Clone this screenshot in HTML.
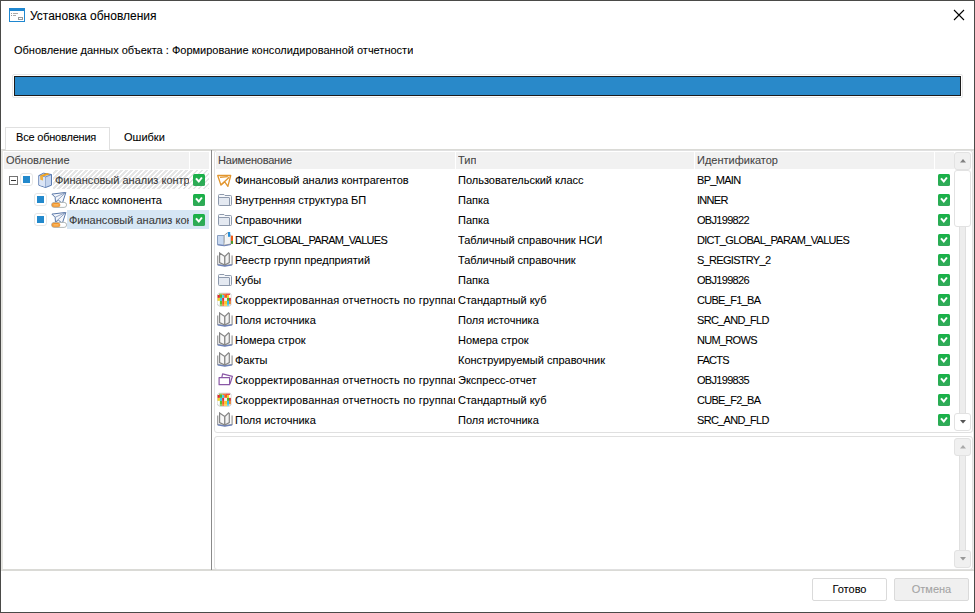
<!DOCTYPE html><html><head><meta charset="utf-8"><title>Установка обновления</title><style>
*{box-sizing:border-box;margin:0;padding:0}
html,body{width:975px;height:613px;overflow:hidden;background:#fff}
#win{position:relative;width:975px;height:613px;background:#fff;font-family:"Liberation Sans",sans-serif;font-size:11px;color:#000}
.abs{position:absolute;display:block}
.t{position:absolute;white-space:nowrap;overflow:hidden;line-height:20px;font-family:"Liberation Sans",sans-serif;font-size:11px;-webkit-text-stroke:0.08px currentColor}
.lat{letter-spacing:-0.7px}
.title{left:30px;top:8px;font-size:12px;line-height:16px;color:#000}
.sub{left:14px;top:40px;color:#000}
#pb-o{position:absolute;left:12px;top:74px;width:951px;height:24px;border:1px solid #e8e8e8;border-radius:2px}
#pb{position:absolute;left:14px;top:76px;width:947px;height:20px;border:1px solid #1d1d1d;background:#2989c9}
#tab1{left:5px;top:127px;width:105px;height:23px;border:1px solid #e0e0e0;border-bottom:none;padding-left:10px;line-height:19px;background:#fff;letter-spacing:-0.2px}
#tab2{left:110px;top:128px;width:70px;height:22px;padding-left:14px;line-height:19px}
#page{position:absolute;left:1px;top:149px;width:973px;height:422px;border-top:2px solid #dadad6;border-left:2px solid #e6e6e2;border-right:1px solid #ececec;border-bottom:2px solid #dadad6}
#lhdr{position:absolute;left:4px;top:152px;width:205px;height:17px;background:#f1f1f1}
.lh1{left:2px;top:-2px;line-height:20px;color:#444}
.lh2{position:absolute;left:185px;top:0;width:1px;height:17px;background:#fff}
#hatch{position:absolute;left:53px;top:170px;width:156px;height:19px;background:repeating-linear-gradient(135deg,#fff 0,#fff 2px,#e5e5e5 2px,#e5e5e5 3.54px)}
#sel{position:absolute;left:67px;top:210px;width:142px;height:19px;background:#d6e6f4}
.exp{position:absolute;left:9px;top:176px;width:9px;height:9px;border:1px solid #737373;background:#fff}
.exp div{position:absolute;left:1px;top:3px;width:5px;height:1px;background:#333}
.tri{position:absolute;width:13px;height:13px;border:1px solid #e6e6e6;border-radius:3px;background:#fff}
.tri div{position:absolute;left:2px;top:2px;width:7px;height:7px;background:#2389cc}
.trow{line-height:20px}
.tg{color:#3a3a3a}
.tb{color:#000}
#split{position:absolute;left:211px;top:150px;width:1px;height:420px;background:#8a8a8a}
#grid{position:absolute;left:214px;top:150px;width:759px;height:283px;border:1px solid #e0e0e0;border-radius:3px}
#ghdr{position:absolute;left:216px;top:152px;width:737px;height:17px}
.gh{position:absolute;top:0;height:17px;background:#f1f1f1}
.gh .t{left:1px;top:-2px;color:#444}
.gr{color:#000}
.sbtrack{position:absolute;left:959px;width:7px;background:#ededed;border-left:1px solid #e0e0e0;border-right:1px solid #e0e0e0}
.sbbtn{position:absolute;left:954px;width:17px;height:18px;border:1px solid #e2e2e2;border-radius:3px;background:#f0f0f0}
.sbbtn.wht{background:#fff}
.sbthumb{position:absolute;left:954px;width:17px;border:1px solid #e2e2e2;border-radius:3px;background:#fff}
.aup{position:absolute;left:5px;top:6px;width:6px;height:3.5px;background:#808080;clip-path:polygon(50% 0,100% 100%,0 100%)}
.adn{position:absolute;left:5px;top:6px;width:6px;height:3.5px;background:#555;clip-path:polygon(0 0,100% 0,50% 100%)}
.dis .aup{background:#aaa}
.dis .adn{background:#999}
#lower{position:absolute;left:214px;top:436px;width:759px;height:134px;border:1px solid #e0e0e0;border-radius:3px}
.btn{top:578px;height:23px;border:1px solid #dadada;border-radius:2px;text-align:center;line-height:21px}
#ok{left:812px;width:75px;background:#fff;color:#000}
#cancel{left:894px;width:75px;background:#f0f0f0;color:#a3a3a3}
#frame{position:absolute;left:0;top:0;width:975px;height:613px;border:1px solid #4a4a48;pointer-events:none}

</style></head><body><div id="win">
<svg width="0" height="0" style="position:absolute">
<defs>
<g id="i-win"><rect x="0.5" y="0.5" width="15" height="13" fill="#fff" stroke="#1f87d0"/><rect x="0" y="0" width="16" height="3" fill="#1f87d0"/><rect x="2" y="5" width="1" height="1" fill="#999"/><rect x="4" y="5" width="5" height="1" fill="#aaa"/><rect x="2" y="7" width="1" height="1" fill="#999"/><rect x="4" y="7" width="3" height="1" fill="#aaa"/><rect x="9.5" y="9.5" width="4" height="2" fill="none" stroke="#999"/></g>
<linearGradient id="gchk" x1="0" y1="0" x2="0" y2="1"><stop offset="0" stop-color="#17b146"/><stop offset="1" stop-color="#33a95a"/></linearGradient><g id="i-chk"><rect x="0" y="0" width="12" height="12" rx="1.5" fill="url(#gchk)"/><path d="M3 4.3L5.8 7.5L8.9 3.5" stroke="#fff" stroke-width="2" fill="none" stroke-linejoin="miter"/></g>
<g id="i-plane" fill="none" stroke="#e2962f" stroke-width="1.3" stroke-linejoin="round"><path d="M0.7 3.5H13.7L10.9 14.3L7.7 9.8L3.9 13Z"/><path d="M3.9 13L12.2 5.2M3 5.3L10.8 4.6"/></g>
<g id="i-folder"><path d="M1.5 12.5V3.5Q1.5 2.5 2.5 2.5H7L8 3.5H13.5Q14.5 3.5 14.5 4.5V12.5Q14.5 13.5 13.5 13.5H2.5Q1.5 13.5 1.5 12.5Z" fill="#f6f8fb" stroke="#8e9aad"/><rect x="2" y="6" width="10.5" height="7" fill="#e4e9f1"/><path d="M1.5 5.5H12Q12.5 5.5 12.5 6V13.5" fill="none" stroke="#8e9aad"/></g>
<g id="i-book"><path d="M0.7 3.5V12.6L7.8 13.6L15.1 12.6V3.5" fill="#fbfbfb" stroke="#999" stroke-width="1.2"/><path d="M2.6 0.9L7.8 4.5V13L2.6 10.6Z" fill="#f7f7f7" stroke="#858585" stroke-width="1.2"/><path d="M11.5 0.9L7.8 4.5V13L12.3 10.6V1.5Z" fill="#f2f2f2" stroke="#858585" stroke-width="1.2"/><path d="M0.7 12.9L7.8 14.2L15.1 12.9" fill="none" stroke="#6a80bb" stroke-width="1.2"/></g>
<g id="i-dict"><path d="M0.5 3.5H7.2V13.2L0.5 12.5Z" fill="#c9d9f0" stroke="#8a9fc0"/><path d="M7.2 3.5L10.3 0.8V10.5L7.2 13.2Z" fill="#fafafa" stroke="#a0a0a0"/><path d="M10.3 0.8L14 3.5V12L7.2 13.2" fill="#f4f4f4" stroke="#a0a0a0"/><rect x="11" y="-0.2" width="2.2" height="5" fill="#2a8fd8"/><rect x="14" y="3.7" width="2" height="5.2" fill="#f05a14"/><rect x="14" y="8.9" width="2" height="3" fill="#4f9a30"/><path d="M0.5 12.8L7.2 13.8L14 12.5" fill="none" stroke="#6a80b8"/></g>
<g id="i-rubik"><path d="M0.5 2.5L2.3 1.2H13.2L14 2.5V13L12 14.3H2.8L0.5 13Z" fill="#f2f2f2" stroke="#c8c8c8" stroke-width="0.8"/><rect x="0.6" y="3" width="2.3" height="2.9" fill="#e3262a"/><rect x="0.6" y="5.9" width="2.3" height="3.0" fill="#f5d21e"/><rect x="0.6" y="8.9" width="2.3" height="3.3" fill="#ffffff"/><rect x="2.9" y="3" width="2.3" height="2.9" fill="#4fb82e"/><rect x="2.9" y="5.9" width="2.3" height="3.0" fill="#35cdee"/><rect x="2.9" y="8.9" width="2.3" height="3.3" fill="#5cbd2c"/><rect x="5.2" y="3" width="2.1" height="2.9" fill="#3ad0f0"/><rect x="5.2" y="5.9" width="2.1" height="3.0" fill="#e4282c"/><rect x="5.2" y="8.9" width="2.1" height="3.3" fill="#fb5a20"/><rect x="7.3" y="3" width="2.7" height="2.9" fill="#f45a1c"/><rect x="7.3" y="5.9" width="2.7" height="3.0" fill="#f4f4f4"/><rect x="7.3" y="8.9" width="2.7" height="3.3" fill="#f5c82a"/><rect x="10" y="3" width="2.1" height="2.9" fill="#f2d22a"/><rect x="10" y="5.9" width="2.1" height="3.0" fill="#4cb52f"/><rect x="10" y="8.9" width="2.1" height="3.3" fill="#33c2e6"/><rect x="12.1" y="3" width="1.7" height="2.9" fill="#ffffff"/><rect x="12.1" y="5.9" width="1.7" height="3.0" fill="#d52a2a"/><rect x="12.1" y="8.9" width="1.7" height="3.3" fill="#ef7a22"/><rect x="2.9" y="12.2" width="2.3" height="1.6" fill="#7cc24a"/><rect x="5.2" y="12.2" width="2.1" height="1.6" fill="#ff6a20"/><rect x="7.3" y="12.2" width="2.7" height="1.6" fill="#f5d040"/><rect x="10" y="12.2" width="2.1" height="1.4" fill="#3cc5e8"/><rect x="2" y="1.6" width="3.5" height="1.4" fill="#8cc84a"/><rect x="5.5" y="1.6" width="3.5" height="1.4" fill="#f47a3a"/><rect x="9" y="1.6" width="4" height="1.4" fill="#e85050"/></g>
<g id="i-express" fill="none" stroke="#8a58a6" stroke-width="1.2" stroke-linejoin="round"><path d="M2.1 5.6H12.6V12.7H2.1Z"/><path d="M4.8 5.6L5.6 1.8L15.4 4.4L13.1 11.8"/></g>
<g id="i-box"><path d="M0.8 3.6L5.5 1.2L13.5 2.5V13.2L7.5 15.5L0.8 13.2Z" fill="#c5d5ee" stroke="#5a7ab0"/><path d="M0.8 3.6L7.5 5L13.5 2.5M7.5 5V15.5" stroke="#5a7ab0" fill="none" stroke-width="0.8"/><path d="M1.2 4L7.4 5.2V15L1.2 13Z" fill="#dbe5f5"/><path d="M2 3.4L9 1.1L12 2.3L5 4.6Z" fill="#efa21e"/><path d="M2 3.4L5 4.6V8.5L2.3 7.8Z" fill="#f0b040"/></g>
<g id="i-cls"><path d="M0.9 2.1L14.9 0.4L11.3 11.4L7.5 8.2L4.5 10L4.1 5.3Z" fill="#f3f6fb" stroke="#5a78a8" stroke-width="1" stroke-linejoin="round"/><path d="M4.5 10L14.9 0.4M4.1 5.3L14.9 0.4" stroke="#7a90b6" fill="none" stroke-width="0.8"/><rect x="0.6" y="10.4" width="15" height="5" rx="2.5" fill="#fff" stroke="#a9b0b0" stroke-width="0.9"/><rect x="1" y="11.1" width="8" height="3.7" rx="1.85" fill="#f59a30" stroke="#e2801a" stroke-width="0.5"/><rect x="2.5" y="12.3" width="5" height="1.2" fill="#fbc070"/></g>
</defs></svg>

<svg class="abs" style="left:9px;top:8px" width="16" height="14" viewBox="0 0 16 14"><use href="#i-win"/></svg>
<div class="t title">Установка обновления</div>
<svg class="abs" style="left:953px;top:9px" width="12" height="12" viewBox="0 0 12 12"><path d="M1 1L11 11M11 1L1 11" stroke="#000" stroke-width="1.1" fill="none"/></svg>
<div class="t sub">Обновление данных объекта : Формирование консолидированной отчетности</div>
<div id="pb-o"></div><div id="pb"></div>
<div id="page"></div>
<div id="tab1" class="t">Все обновления</div><div id="tab2" class="t">Ошибки</div>
<div id="lhdr"><div class="t lh1">Обновление</div><div class="lh2"></div></div>
<div id="hatch"></div><div id="sel"></div>
<div class="exp"><div></div></div>
<div class="tri" style="left:20px;top:173px"><div></div></div>
<svg class="abs" style="left:38px;top:172px" width="16" height="16" viewBox="0 0 16 16"><use href="#i-box"/></svg>
<div class="t trow tg" style="left:55px;top:170px;width:134px">Финансовый анализ контр</div>
<svg class="abs" style="left:193px;top:174px" width="12" height="12" viewBox="0 0 12 12"><use href="#i-chk"/></svg>
<div class="tri" style="left:34px;top:193px"><div></div></div>
<svg class="abs" style="left:51px;top:192px" width="16" height="16" viewBox="0 0 16 16"><use href="#i-cls"/></svg>
<div class="t trow tb" style="left:69px;top:190px;width:120px">Класс компонента</div>
<svg class="abs" style="left:193px;top:194px" width="12" height="12" viewBox="0 0 12 12"><use href="#i-chk"/></svg>
<div class="tri" style="left:34px;top:213px"><div></div></div>
<svg class="abs" style="left:51px;top:212px" width="16" height="16" viewBox="0 0 16 16"><use href="#i-cls"/></svg>
<div class="t trow tg" style="left:69px;top:210px;width:120px">Финансовый анализ кон</div>
<svg class="abs" style="left:193px;top:214px" width="12" height="12" viewBox="0 0 12 12"><use href="#i-chk"/></svg>
<div id="split"></div>
<div id="grid"></div>
<div id="ghdr"><div class="gh" style="left:0;width:239px"><span class="t" style="left:2px;letter-spacing:-0.2px">Наименование</span></div><div class="gh" style="left:240px;width:238px"><span class="t" style="left:2px">Тип</span></div><div class="gh" style="left:479px;width:239px"><span class="t" style="left:2px">Идентификатор</span></div><div class="gh" style="left:719px;width:19px"></div></div>
<svg class="abs" style="left:217px;top:172px" width="16" height="16" viewBox="0 0 16 16"><use href="#i-plane"/></svg>
<div class="t gr" style="left:235px;top:170px;width:220px">Финансовый анализ контрагентов</div>
<div class="t gr" style="left:458px;top:170px;width:235px">Пользовательский класс</div>
<div class="t gr" style="left:697px;top:170px;width:236px"><span class="lat">BP_MAIN</span></div>
<svg class="abs" style="left:938px;top:174px" width="12" height="12" viewBox="0 0 12 12"><use href="#i-chk"/></svg>
<svg class="abs" style="left:217px;top:192px" width="16" height="16" viewBox="0 0 16 16"><use href="#i-folder"/></svg>
<div class="t gr" style="left:235px;top:190px;width:220px">Внутренняя структура БП</div>
<div class="t gr" style="left:458px;top:190px;width:235px">Папка</div>
<div class="t gr" style="left:697px;top:190px;width:236px"><span class="lat">INNER</span></div>
<svg class="abs" style="left:938px;top:194px" width="12" height="12" viewBox="0 0 12 12"><use href="#i-chk"/></svg>
<svg class="abs" style="left:217px;top:212px" width="16" height="16" viewBox="0 0 16 16"><use href="#i-folder"/></svg>
<div class="t gr" style="left:235px;top:210px;width:220px">Справочники</div>
<div class="t gr" style="left:458px;top:210px;width:235px">Папка</div>
<div class="t gr" style="left:697px;top:210px;width:236px"><span class="lat">OBJ199822</span></div>
<svg class="abs" style="left:938px;top:214px" width="12" height="12" viewBox="0 0 12 12"><use href="#i-chk"/></svg>
<svg class="abs" style="left:217px;top:232px" width="16" height="16" viewBox="0 0 16 16"><use href="#i-dict"/></svg>
<div class="t gr" style="left:235px;top:230px;width:220px"><span class="lat">DICT_GLOBAL_PARAM_VALUES</span></div>
<div class="t gr" style="left:458px;top:230px;width:235px">Табличный справочник НСИ</div>
<div class="t gr" style="left:697px;top:230px;width:236px"><span class="lat">DICT_GLOBAL_PARAM_VALUES</span></div>
<svg class="abs" style="left:938px;top:234px" width="12" height="12" viewBox="0 0 12 12"><use href="#i-chk"/></svg>
<svg class="abs" style="left:217px;top:252px" width="16" height="16" viewBox="0 0 16 16"><use href="#i-book"/></svg>
<div class="t gr" style="left:235px;top:250px;width:220px">Реестр групп предприятий</div>
<div class="t gr" style="left:458px;top:250px;width:235px">Табличный справочник</div>
<div class="t gr" style="left:697px;top:250px;width:236px"><span class="lat">S_REGISTRY_2</span></div>
<svg class="abs" style="left:938px;top:254px" width="12" height="12" viewBox="0 0 12 12"><use href="#i-chk"/></svg>
<svg class="abs" style="left:217px;top:272px" width="16" height="16" viewBox="0 0 16 16"><use href="#i-folder"/></svg>
<div class="t gr" style="left:235px;top:270px;width:220px">Кубы</div>
<div class="t gr" style="left:458px;top:270px;width:235px">Папка</div>
<div class="t gr" style="left:697px;top:270px;width:236px"><span class="lat">OBJ199826</span></div>
<svg class="abs" style="left:938px;top:274px" width="12" height="12" viewBox="0 0 12 12"><use href="#i-chk"/></svg>
<svg class="abs" style="left:217px;top:292px" width="16" height="16" viewBox="0 0 16 16"><use href="#i-rubik"/></svg>
<div class="t gr" style="left:235px;top:290px;width:220px;letter-spacing:0.15px">Скорректированная отчетность по группам</div>
<div class="t gr" style="left:458px;top:290px;width:235px">Стандартный куб</div>
<div class="t gr" style="left:697px;top:290px;width:236px"><span class="lat">CUBE_F1_BA</span></div>
<svg class="abs" style="left:938px;top:294px" width="12" height="12" viewBox="0 0 12 12"><use href="#i-chk"/></svg>
<svg class="abs" style="left:217px;top:312px" width="16" height="16" viewBox="0 0 16 16"><use href="#i-book"/></svg>
<div class="t gr" style="left:235px;top:310px;width:220px">Поля источника</div>
<div class="t gr" style="left:458px;top:310px;width:235px">Поля источника</div>
<div class="t gr" style="left:697px;top:310px;width:236px"><span class="lat">SRC_AND_FLD</span></div>
<svg class="abs" style="left:938px;top:314px" width="12" height="12" viewBox="0 0 12 12"><use href="#i-chk"/></svg>
<svg class="abs" style="left:217px;top:332px" width="16" height="16" viewBox="0 0 16 16"><use href="#i-book"/></svg>
<div class="t gr" style="left:235px;top:330px;width:220px">Номера строк</div>
<div class="t gr" style="left:458px;top:330px;width:235px">Номера строк</div>
<div class="t gr" style="left:697px;top:330px;width:236px"><span class="lat">NUM_ROWS</span></div>
<svg class="abs" style="left:938px;top:334px" width="12" height="12" viewBox="0 0 12 12"><use href="#i-chk"/></svg>
<svg class="abs" style="left:217px;top:352px" width="16" height="16" viewBox="0 0 16 16"><use href="#i-book"/></svg>
<div class="t gr" style="left:235px;top:350px;width:220px">Факты</div>
<div class="t gr" style="left:458px;top:350px;width:235px">Конструируемый справочник</div>
<div class="t gr" style="left:697px;top:350px;width:236px"><span class="lat">FACTS</span></div>
<svg class="abs" style="left:938px;top:354px" width="12" height="12" viewBox="0 0 12 12"><use href="#i-chk"/></svg>
<svg class="abs" style="left:217px;top:372px" width="16" height="16" viewBox="0 0 16 16"><use href="#i-express"/></svg>
<div class="t gr" style="left:235px;top:370px;width:220px;letter-spacing:0.15px">Скорректированная отчетность по группам</div>
<div class="t gr" style="left:458px;top:370px;width:235px">Экспресс-отчет</div>
<div class="t gr" style="left:697px;top:370px;width:236px"><span class="lat">OBJ199835</span></div>
<svg class="abs" style="left:938px;top:374px" width="12" height="12" viewBox="0 0 12 12"><use href="#i-chk"/></svg>
<svg class="abs" style="left:217px;top:392px" width="16" height="16" viewBox="0 0 16 16"><use href="#i-rubik"/></svg>
<div class="t gr" style="left:235px;top:390px;width:220px;letter-spacing:0.15px">Скорректированная отчетность по группам</div>
<div class="t gr" style="left:458px;top:390px;width:235px">Стандартный куб</div>
<div class="t gr" style="left:697px;top:390px;width:236px"><span class="lat">CUBE_F2_BA</span></div>
<svg class="abs" style="left:938px;top:394px" width="12" height="12" viewBox="0 0 12 12"><use href="#i-chk"/></svg>
<svg class="abs" style="left:217px;top:412px" width="16" height="16" viewBox="0 0 16 16"><use href="#i-book"/></svg>
<div class="t gr" style="left:235px;top:410px;width:220px">Поля источника</div>
<div class="t gr" style="left:458px;top:410px;width:235px">Поля источника</div>
<div class="t gr" style="left:697px;top:410px;width:236px"><span class="lat">SRC_AND_FLD</span></div>
<svg class="abs" style="left:938px;top:414px" width="12" height="12" viewBox="0 0 12 12"><use href="#i-chk"/></svg>
<div class="sbtrack" style="top:169px;height:244px"></div>
<div class="sbbtn" style="top:152px"><div class="aup"></div></div>
<div class="sbthumb" style="top:170px;height:57px"></div>
<div class="sbbtn wht" style="top:413px"><div class="adn"></div></div>
<div id="lower"></div>
<div class="sbtrack" style="top:455px;height:96px"></div>
<div class="sbbtn dis" style="top:438px;height:18px"><div class="aup"></div></div>
<div class="sbbtn dis" style="top:550px;height:18px"><div class="adn"></div></div>
<div id="ok" class="btn t">Готово</div><div id="cancel" class="btn t">Отмена</div>
<div id="frame"></div>
</div></body></html>
